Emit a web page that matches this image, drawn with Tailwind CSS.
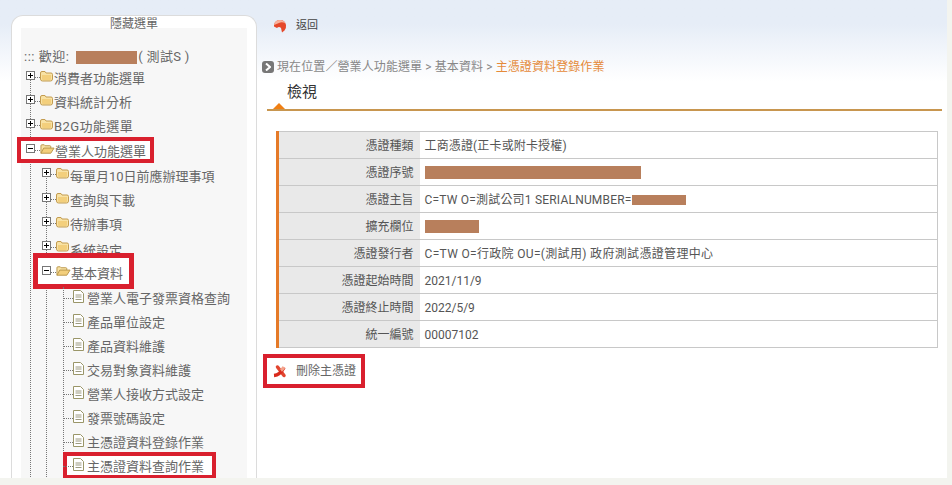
<!DOCTYPE html>
<html lang="zh-Hant">
<head>
    <meta charset="UTF-8">
    <title>主憑證資料登錄作業</title>
    <script src="https://cdn.jsdelivr.net/npm/@tailwindcss/browser@4"></script>
</head>
<body class="w-[952px] h-[485px] overflow-hidden bg-white font-['Roboto','Noto_Sans_CJK_TC',sans-serif] text-[#666]">
    <svg class="hidden">
        <symbol id="plus" viewBox="0 0 9 9"><rect x=".5" y=".5" width="8" height="8" fill="#fff" stroke="#777"/><path d="M2 4.500h5M4.500 2v5" stroke="#000"/></symbol>
        <symbol id="minus" viewBox="0 0 9 9"><rect x=".5" y=".5" width="8" height="8" fill="#fff" stroke="#777"/><path d="M2 4.500h5" stroke="#000"/></symbol>
        <symbol id="folder" viewBox="0 0 13 12"><path d="M.5 3q0-1.500 1.500-1.500h3l1 1.500h5q1.500 0 1.500 1.500v4.500q0 2-2 2h-8q-2 0-2-2z" fill="#f8e2a4" stroke="#c39c50"/><path d="M2 5h9v4q0 1-1 1h-7q-1 0-1-1z" fill="#f3cf7c"/></symbol>
        <symbol id="open" viewBox="0 0 16 12"><path d="M1 10.500v-8q0-1 1-1h2.500l1 1h5q1 0 1 1v1.500" fill="#f8e2a4" stroke="#b9954a"/><path d="M1 10.500l3-5.500h11l-3.500 5.500z" fill="#f3cf7c" stroke="#b9954a" stroke-linejoin="round"/></symbol>
        <symbol id="doc" viewBox="0 0 11 13"><path d="M.5.500h7l3 3v9h-10z" fill="#fff" stroke="#9a9668"/><path d="M2.500 5h6M2.500 7h6M2.500 9.500h6" stroke="#9c9a80"/></symbol>
    </svg>

    <div class="flex h-[478px] bg-gradient-to-b from-[#e6edf7] from-[5%] to-white to-[17%]">
        <aside class="relative mt-[15px] ml-[11px] w-[246px] shrink-0 rounded-t-[12px] border border-b-0 border-[#dcdcdc] bg-white px-[9px] overflow-hidden">
            <div class="h-[12px] text-center text-[12px] leading-[17px] relative z-10">隱藏選單</div>
            <div class="h-full bg-[#f7f7f7] text-[13px]">
                <div class="flex items-center h-[39px] pt-[19px] pl-[3px] tracking-[0.5px]">
                    <span>::: 歡迎:</span>
                    <span class="ml-[7px] w-[61px] h-[13px] bg-[#b87f5c]"></span>
                    <span class="ml-[1px] tracking-[0.3px]">( 測試S )</span>
                </div>
                <ul class="relative -mt-[2px] ml-[9px]">
                    <span class="absolute left-0 top-[15px] bottom-0 border-l border-dotted border-[#777]"></span>
                    <li class="relative flex items-center h-[24.4px] -ml-[4px]"><svg class="w-[9px] h-[9px] -mt-[4px]"><use href="#plus"/></svg><span class="w-[5px] border-t border-dotted border-[#777]"></span><svg class="w-[13px] h-[12px] -mt-[3px]"><use href="#folder"/></svg><span class="ml-[1px] mt-[3px]">消費者功能選單</span></li>
                    <li class="relative flex items-center h-[24.4px] -ml-[4px]"><svg class="w-[9px] h-[9px] -mt-[4px]"><use href="#plus"/></svg><span class="w-[5px] border-t border-dotted border-[#777]"></span><svg class="w-[13px] h-[12px] -mt-[3px]"><use href="#folder"/></svg><span class="ml-[1px] mt-[3px]">資料統計分析</span></li>
                    <li class="relative flex items-center h-[24.4px] -ml-[4px]"><svg class="w-[9px] h-[9px] -mt-[4px]"><use href="#plus"/></svg><span class="w-[5px] border-t border-dotted border-[#777]"></span><svg class="w-[13px] h-[12px] -mt-[3px]"><use href="#folder"/></svg><span class="ml-[1px] mt-[2px] tracking-[0.4px]">B2G功能選單</span></li>
                    <li class="relative flex items-center h-[24.4px] -ml-[4px]">
                        <span class="absolute left-[-9px] top-[-1px] w-[137px] h-[26px] border-[4px] border-[#d9202e] bg-white"></span>
                        <svg class="relative w-[9px] h-[9px] -mt-[4px]"><use href="#minus"/></svg><span class="relative w-[5px] border-t border-dotted border-[#777]"></span><svg class="relative w-[15px] h-[12px] -mt-[3px]"><use href="#open"/></svg><span class="relative mt-[2px]">營業人功能選單</span>
                    </li>
                    <li>
                        <ul class="relative ml-[16px]">
                            <span class="absolute left-0 top-[15px] bottom-0 border-l border-dotted border-[#777]"></span>
                            <li class="relative flex items-center h-[24.4px] -ml-[4px]"><svg class="w-[9px] h-[9px] -mt-[4px]"><use href="#plus"/></svg><span class="w-[5px] border-t border-dotted border-[#777]"></span><svg class="w-[13px] h-[12px] -mt-[3px]"><use href="#folder"/></svg><span class="ml-[1px] mt-[3px]">每單月10日前應辦理事項</span></li>
                            <li class="relative flex items-center h-[24.4px] -ml-[4px]"><svg class="w-[9px] h-[9px] -mt-[4px]"><use href="#plus"/></svg><span class="w-[5px] border-t border-dotted border-[#777]"></span><svg class="w-[13px] h-[12px] -mt-[3px]"><use href="#folder"/></svg><span class="ml-[1px] mt-[3px]">查詢與下載</span></li>
                            <li class="relative flex items-center h-[24.4px] -ml-[4px]"><svg class="w-[9px] h-[9px] -mt-[4px]"><use href="#plus"/></svg><span class="w-[5px] border-t border-dotted border-[#777]"></span><svg class="w-[13px] h-[12px] -mt-[3px]"><use href="#folder"/></svg><span class="ml-[1px] mt-[3px]">待辦事項</span></li>
                            <li class="relative flex items-center h-[24.4px] -ml-[4px]"><svg class="w-[9px] h-[9px] -mt-[4px]"><use href="#plus"/></svg><span class="w-[5px] border-t border-dotted border-[#777]"></span><svg class="w-[13px] h-[12px] -mt-[3px]"><use href="#folder"/></svg><span class="ml-[1px] mt-[5px]">系統設定</span></li>
                            <li class="relative flex items-center h-[24.4px] -ml-[4px]">
                                <span class="absolute left-[-9px] top-[-7px] w-[101px] h-[36px] border-[5px] border-[#d9202e] bg-white"></span>
                                <svg class="relative w-[9px] h-[9px] -mt-[4px]"><use href="#minus"/></svg><span class="relative w-[5px] border-t border-dotted border-[#777]"></span><svg class="relative w-[15px] h-[12px] -mt-[3px]"><use href="#open"/></svg><span class="relative mt-[2px]">基本資料</span>
                            </li>
                            <li>
                                <ul class="relative ml-[17px] mt-[2px]">
                                    <span class="absolute left-0 top-0 bottom-0 border-l border-dotted border-[#777]"></span>
                                    <li class="relative flex items-center h-[24px]"><span class="w-[10px] border-t border-dotted border-[#777]"></span><svg class="w-[11px] h-[13px] -mt-[5px]"><use href="#doc"/></svg><span class="ml-[3px]">營業人電子發票資格查詢</span></li>
                                    <li class="relative flex items-center h-[24px]"><span class="w-[10px] border-t border-dotted border-[#777]"></span><svg class="w-[11px] h-[13px] -mt-[5px]"><use href="#doc"/></svg><span class="ml-[3px]">產品單位設定</span></li>
                                    <li class="relative flex items-center h-[24px]"><span class="w-[10px] border-t border-dotted border-[#777]"></span><svg class="w-[11px] h-[13px] -mt-[5px]"><use href="#doc"/></svg><span class="ml-[3px]">產品資料維護</span></li>
                                    <li class="relative flex items-center h-[24px]"><span class="w-[10px] border-t border-dotted border-[#777]"></span><svg class="w-[11px] h-[13px] -mt-[5px]"><use href="#doc"/></svg><span class="ml-[3px]">交易對象資料維護</span></li>
                                    <li class="relative flex items-center h-[24px]"><span class="w-[10px] border-t border-dotted border-[#777]"></span><svg class="w-[11px] h-[13px] -mt-[5px]"><use href="#doc"/></svg><span class="ml-[3px]">營業人接收方式設定</span></li>
                                    <li class="relative flex items-center h-[24px]"><span class="w-[10px] border-t border-dotted border-[#777]"></span><svg class="w-[11px] h-[13px] -mt-[5px]"><use href="#doc"/></svg><span class="ml-[3px]">發票號碼設定</span></li>
                                    <li class="relative flex items-center h-[24px]"><span class="w-[10px] border-t border-dotted border-[#777]"></span><svg class="w-[11px] h-[13px] -mt-[5px]"><use href="#doc"/></svg><span class="ml-[3px]">主憑證資料登錄作業</span></li>
                                    <li class="relative flex items-center h-[24px]">
                                        <span class="absolute left-[0px] top-[-3px] w-[153px] h-[27px] border-[4px] border-[#d9202e] bg-white"></span>
                                        <span class="relative w-[10px] border-t border-dotted border-[#777]"></span><svg class="relative w-[11px] h-[13px] -mt-[5px]"><use href="#doc"/></svg><span class="relative ml-[3px]">主憑證資料查詢作業</span>
                                    </li>
                                </ul>
                            </li>
                        </ul>
                    </li>
                </ul>
            </div>
        </aside>

        <main class="flex-1 min-w-0 pl-[10px] pr-[5px] text-[12px]">
            <div class="flex items-center h-[52px] pl-[6px] text-[#444]">
                <svg class="w-[14px] h-[14px]" viewBox="0 0 14 14"><path d="M1 6q1-5 6-5 5 0 6 5 .5 3-1.500 5.500L9 13.500 8 9q-2-2-4 0L1 7.500z" fill="#e5482a"/><path d="M1 6q1-5 6-5 4 0 5.500 3.500Q9 2.500 6 4 3.500 5 1 6z" fill="#f8b29c"/></svg>
                <span class="ml-[9px] text-[11px]">返回</span>
            </div>
            <div class="flex items-center h-[30px] -ml-[5px] text-[#888] tracking-[0.1px]">
                <span class="flex items-center justify-center w-[12px] h-[12px] rounded-[3px] bg-[#777]">
                    <svg class="w-[6px] h-[8px]" viewBox="0 0 6 8"><path d="M1 .5L5 4 1 7.500" fill="none" stroke="#fff" stroke-width="2"/></svg>
                </span>
                <span class="ml-[3px]">現在位置／營業人功能選單 &gt; 基本資料 &gt; <span class="text-[#e58a3a]">主憑證資料登錄作業</span></span>
            </div>
            <div class="relative h-[29px] border-b-2 border-[#c8964f] pl-[20px] text-[15px] leading-[20px] text-[#333]">
                檢視
                <span class="absolute left-[6px] bottom-0 w-0 h-0 border-x-[6px] border-x-transparent border-b-[6px] border-b-[#f07f13]"></span>
            </div>
            <table class="w-[662px] mt-[20px] ml-[9px] border-l-[3px] border-t border-r border-[#c8c8c8] border-l-[#e57a28] text-[#555]">
                <tbody>
                    <tr class="h-[27px] border-b border-[#c8c8c8]"><th class="w-[142px] bg-[#e9e9e9] pr-[6px] pt-[2px] text-right font-normal">憑證種類</th><td class="pl-[5px] pt-[2px] tracking-[0.15px]">工商憑證(正卡或附卡授權)</td></tr>
                    <tr class="h-[27px] border-b border-[#c8c8c8]"><th class="bg-[#e9e9e9] pr-[6px] pt-[2px] text-right font-normal">憑證序號</th><td class="pl-[5px]"><div class="w-[216px] h-[13px] bg-[#b87f5c]"></div></td></tr>
                    <tr class="h-[27px] border-b border-[#c8c8c8]"><th class="bg-[#e9e9e9] pr-[6px] pt-[2px] text-right font-normal">憑證主旨</th><td class="pl-[5px] pt-[2px] tracking-[0.2px]"><div class="flex items-center">C=TW O=測試公司1 SERIALNUMBER=<span class="w-[54px] h-[10px] bg-[#b87f5c]"></span></div></td></tr>
                    <tr class="h-[27px] border-b border-[#c8c8c8]"><th class="bg-[#e9e9e9] pr-[6px] pt-[2px] text-right font-normal">擴充欄位</th><td class="pl-[5px]"><div class="w-[54px] h-[13px] bg-[#b87f5c]"></div></td></tr>
                    <tr class="h-[27px] border-b border-[#c8c8c8]"><th class="bg-[#e9e9e9] pr-[6px] pt-[2px] text-right font-normal">憑證發行者</th><td class="pl-[5px] pt-[2px] tracking-[0.33px]">C=TW O=行政院 OU=(測試用) 政府測試憑證管理中心</td></tr>
                    <tr class="h-[27px] border-b border-[#c8c8c8]"><th class="bg-[#e9e9e9] pr-[6px] pt-[2px] text-right font-normal">憑證起始時間</th><td class="pl-[5px] pt-[2px]">2021/11/9</td></tr>
                    <tr class="h-[27px] border-b border-[#c8c8c8]"><th class="bg-[#e9e9e9] pr-[6px] pt-[2px] text-right font-normal">憑證終止時間</th><td class="pl-[5px] pt-[2px]">2022/5/9</td></tr>
                    <tr class="h-[27px] border-b border-[#c8c8c8]"><th class="bg-[#e9e9e9] pr-[6px] pt-[2px] text-right font-normal">統一編號</th><td class="pl-[5px] pt-[2px]">00007102</td></tr>
                </tbody>
            </table>
            <div class="flex items-center w-[102px] h-[34px] mt-[6px] -ml-[4px] border-[4px] border-[#d9202e] bg-white pl-[6px]">
                <svg class="w-[14px] h-[14px]" viewBox="0 0 14 14"><path d="M4.500 3L11 11.500" fill="none" stroke="#e2452f" stroke-width="3.500" stroke-linecap="round"/><path d="M1 11.500Q7 11 11 3.500" fill="none" stroke="#d92a1c" stroke-width="3.500"/><path d="M8 6.500Q10 5 11 3" fill="none" stroke="#f4a48c" stroke-width="3"/></svg>
                <span class="ml-[9px]">刪除主憑證</span>
            </div>
        </main>
        <div class="w-[5px] shrink-0 bg-[#f3f4ef]"></div>
    </div>
    <div class="h-[7px] bg-[#f3f4ef]"></div>
</body>
</html>
